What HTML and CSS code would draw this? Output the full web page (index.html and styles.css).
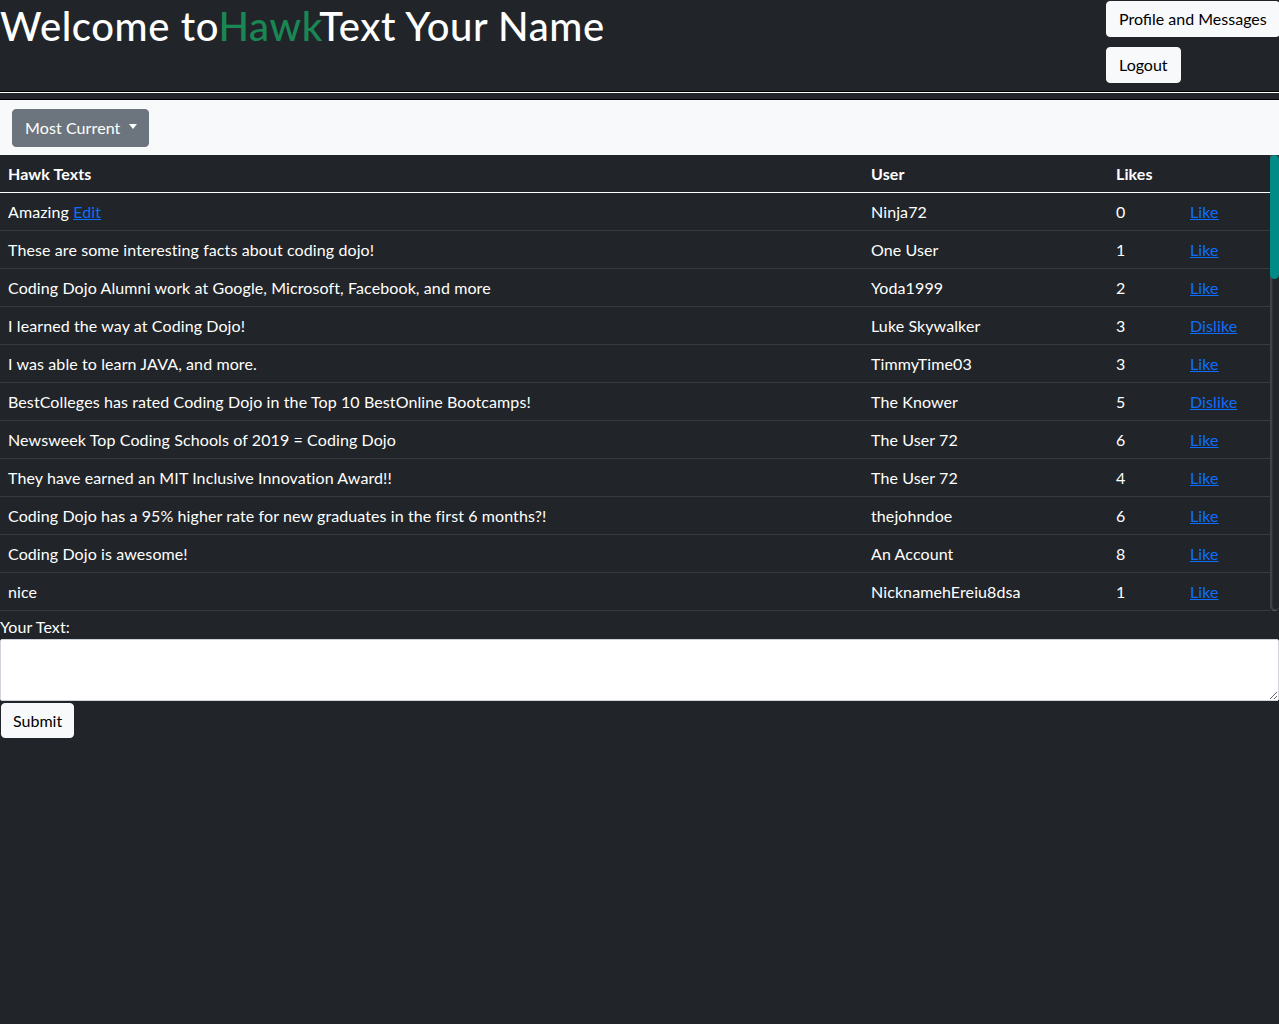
FILE: index.html
```html
<!DOCTYPE html>
<html lang="en">
<head>
<meta charset="utf-8">
<title>Hawk Text</title>
<link rel="stylesheet" href="styles.css">
</head>
<body>
<header class="top">
  <h1 class="title">Welcome to<span class="brand">Hawk</span>Text Your Name</h1>
  <div class="actions">
    <a class="btn btn-light" href="#">Profile and Messages</a>
    <a class="btn btn-light" href="#">Logout</a>
  </div>
</header>
<div class="rule"><div class="rule-inner"></div></div>
<nav class="filter-bar">
  <button class="btn btn-secondary dropdown">Most Current<span class="caret"></span></button>
</nav>
<div class="table-wrap">
  <div class="table-scroll">
    <table class="texts">
      <colgroup>
        <col class="c-text"><col class="c-user"><col class="c-likes"><col class="c-act">
      </colgroup>
      <thead>
        <tr><th>Hawk Texts</th><th>User</th><th>Likes</th><th></th></tr>
      </thead>
      <tbody>
        <tr><td>Amazing <a href="#">Edit</a></td><td>Ninja72</td><td>0</td><td><a href="#">Like</a></td></tr>
        <tr><td>These are some interesting facts about coding dojo!</td><td>One User</td><td>1</td><td><a href="#">Like</a></td></tr>
        <tr><td>Coding Dojo Alumni work at Google, Microsoft, Facebook, and more</td><td>Yoda1999</td><td>2</td><td><a href="#">Like</a></td></tr>
        <tr><td>I learned the way at Coding Dojo!</td><td>Luke Skywalker</td><td>3</td><td><a href="#">Dislike</a></td></tr>
        <tr><td>I was able to learn JAVA, and more.</td><td>TimmyTime03</td><td>3</td><td><a href="#">Like</a></td></tr>
        <tr><td>BestColleges has rated Coding Dojo in the Top 10 BestOnline Bootcamps!</td><td>The Knower</td><td>5</td><td><a href="#">Dislike</a></td></tr>
        <tr><td>Newsweek Top Coding Schools of 2019 = Coding Dojo</td><td>The User 72</td><td>6</td><td><a href="#">Like</a></td></tr>
        <tr><td>They have earned an MIT Inclusive Innovation Award!!</td><td>The User 72</td><td>4</td><td><a href="#">Like</a></td></tr>
        <tr><td>Coding Dojo has a 95% higher rate for new graduates in the first 6 months?!</td><td>thejohndoe</td><td>6</td><td><a href="#">Like</a></td></tr>
        <tr><td>Coding Dojo is awesome!</td><td>An Account</td><td>8</td><td><a href="#">Like</a></td></tr>
        <tr><td>nice</td><td>NicknamehEreiu8dsa</td><td>1</td><td><a href="#">Like</a></td></tr>
      </tbody>
    </table>
  </div>
  <div class="scrollbar" aria-hidden="true"><div class="scroll-thumb"></div></div>
</div>
<form class="compose">
  <label class="compose-label" for="text">Your Text:</label>
  <textarea class="compose-input" id="text"></textarea>
  <button type="button" class="btn btn-light submit">Submit</button>
</form>
</body>
</html>
```
FILE: styles.css
```css
* { box-sizing: border-box; }
html, body { margin: 0; padding: 0; }
body {
  background: #212529;
  color: #fff;
  font-family: "Segoe UI", Lato, "Open Sans", sans-serif;
  font-size: 16px;
  letter-spacing: 0.1px;
  line-height: 1.5;
  min-height: 1024px;
}
.top {
  display: flex;
  justify-content: space-between;
  align-items: flex-start;
  height: 91px;
}
.title {
  margin: 0;
  font-size: 40px;
  font-weight: 500;
  letter-spacing: 0.6px;
  line-height: 52px;
  color: #fff;
}
.brand { color: #198754; }
.actions {
  display: flex;
  flex-direction: column;
  align-items: flex-start;
  gap: 10px;
  padding-top: 1px;
  width: 173px;
  flex: none;
}
.btn {
  display: inline-block;
  font-family: inherit;
  font-size: 16px;
  line-height: 24px;
  padding: 5px 12px;
  border: 1px solid transparent;
  border-radius: 4px;
  text-decoration: none;
  white-space: nowrap;
  letter-spacing: 0;
  cursor: pointer;
}
.btn-light {
  background: #f8f9fa;
  border-color: #f8f9fa;
  color: #000;
}
.btn-secondary {
  background: #6c757d;
  border-color: #6c757d;
  color: #fff;
}
.rule { border-top: 1px solid #000; }
.rule-inner {
  border-top: 1px solid #fff;
  border-bottom: 1px solid #000;
  height: 8px;
}
.filter-bar {
  background: #f8f9fa;
  height: 55px;
  padding: 9px 12px 0;
}
.dropdown {
  height: 38px;
  width: 137px;
  padding: 6px 12px;
  display: inline-flex;
  align-items: center;
  letter-spacing: 0.1px;
}
.caret {
  width: 0;
  height: 0;
  border-left: 4.5px solid transparent;
  border-right: 4.5px solid transparent;
  border-top: 5px solid #fff;
  margin-left: 9px;
  margin-bottom: 3px;
}
.table-wrap {
  display: flex;
  height: 456px;
}
.table-scroll {
  width: 1270px;
  height: 456px;
  overflow: hidden;
}
.scrollbar {
  width: 9px;
  height: 456px;
  background: #212529;
  border-left: 1px solid #3e4347;
  border-bottom: 1px solid #5a5f63;
  border-radius: 0 0 5px 5px;
  box-shadow: inset 1px 0 2px #4a4f53;
}
.scroll-thumb {
  width: 9px;
  margin-left: -1px;
  height: 124px;
  background: #008b87;
  border-radius: 5px;
}
.texts {
  width: 1270px;
  border-collapse: collapse;
  table-layout: fixed;
  color: #fff;
}
.c-text { width: 863px; }
.c-user { width: 245px; }
.c-likes { width: 74px; }
.c-act { width: 88px; }
.texts th, .texts td {
  text-align: left;
  padding: 7px 8px 6px;
  line-height: 24px;
  border-bottom: 1px solid #373b3e;
  white-space: nowrap;
}
.texts th { font-weight: 700; }
.texts thead th { border-bottom: 1px solid #fff; }
.texts a { color: #0d6efd; text-decoration: underline; }
.compose {
  display: flex;
  flex-direction: column;
  align-items: flex-start;
}
.compose-label { line-height: 24px; height: 28px; padding-top: 4px; }
.compose-input {
  width: 100%;
  height: 62px;
  border: 1px solid #ced4da;
  border-radius: 2px;
  background: #fff;
  font-family: inherit;
  resize: vertical;
  margin: 0 0 2px;
}
.submit {
  margin-left: 1px;
  height: 35px;
  padding: 4px 11px;
}
```
